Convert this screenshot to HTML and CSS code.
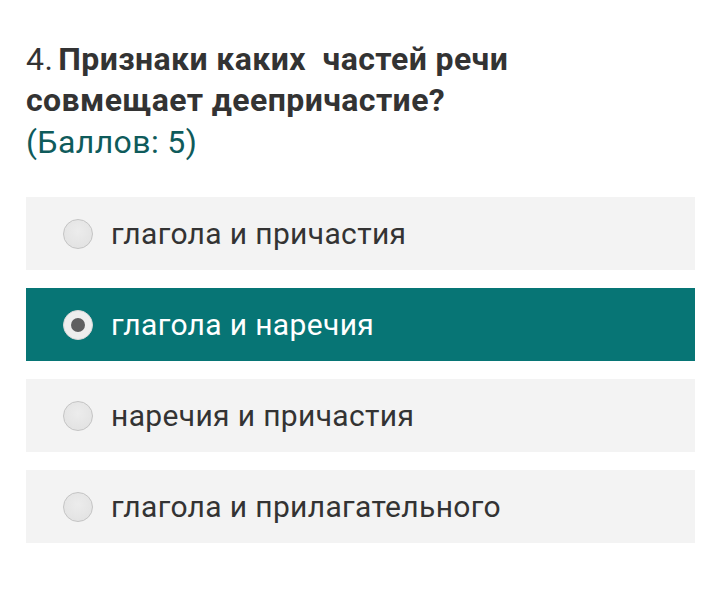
FILE: index.html
```html
<!DOCTYPE html>
<html lang="ru">
<head>
<meta charset="utf-8">
<link rel="stylesheet" href="styles.css">
</head>
<body>
<div class="question">
  <div class="title"><span class="num">4.</span><b class="qtext">Признаки каких&nbsp; частей речи совмещает деепричастие?</b></div>
  <div class="score">(Баллов: 5)</div>
</div>
<div class="options">
  <label class="option"><span class="radio"></span><span class="text">глагола и причастия</span></label>
  <label class="option selected"><span class="radio"></span><span class="text">глагола и наречия</span></label>
  <label class="option"><span class="radio"></span><span class="text">наречия и причастия</span></label>
  <label class="option"><span class="radio"></span><span class="text">глагола и прилагательного</span></label>
</div>
</body>
</html>
```

FILE: styles.css
```css
html, body {
  margin: 0;
  padding: 0;
  background: #ffffff;
}
body {
  padding: 39px 17px 0 26px;
  font-family: Roboto, "Noto Sans", sans-serif;
  color: #333333;
}
.question {
  width: 520px;
}
.title {
  font-size: 32px;
  line-height: 41px;
  letter-spacing: 0.4px;
  color: #333333;
}
.title .qtext {
  font-weight: 700;
  margin-left: 5px;
}
.score {
  font-size: 32px;
  line-height: 42px;
  letter-spacing: 0.4px;
  color: #0f5b5b;
}
.options {
  margin-top: 34px;
  display: flex;
  flex-direction: column;
  gap: 18px;
}
.option {
  display: flex;
  align-items: center;
  height: 73px;
  background: #f3f3f3;
  padding-left: 37px;
  gap: 18px;
}
.radio {
  width: 28px;
  height: 28px;
  border-radius: 50%;
  border: 1px solid #c4c4c4;
  background: radial-gradient(circle at 50% 40%, #ececec, #e0e0e0);
  box-sizing: content-box;
  flex-shrink: 0;
  display: flex;
  align-items: center;
  justify-content: center;
}
.text {
  font-size: 30px;
  letter-spacing: 0.35px;
  color: #333333;
}
.option.selected {
  background: #077575;
}
.option.selected .text {
  color: #ffffff;
}
.option.selected .radio {
  background: #eeeeee;
  border-color: #d8d8d8;
}
.option.selected .radio::after {
  content: "";
  width: 14px;
  height: 14px;
  border-radius: 50%;
  background: #5f5f60;
}
```
